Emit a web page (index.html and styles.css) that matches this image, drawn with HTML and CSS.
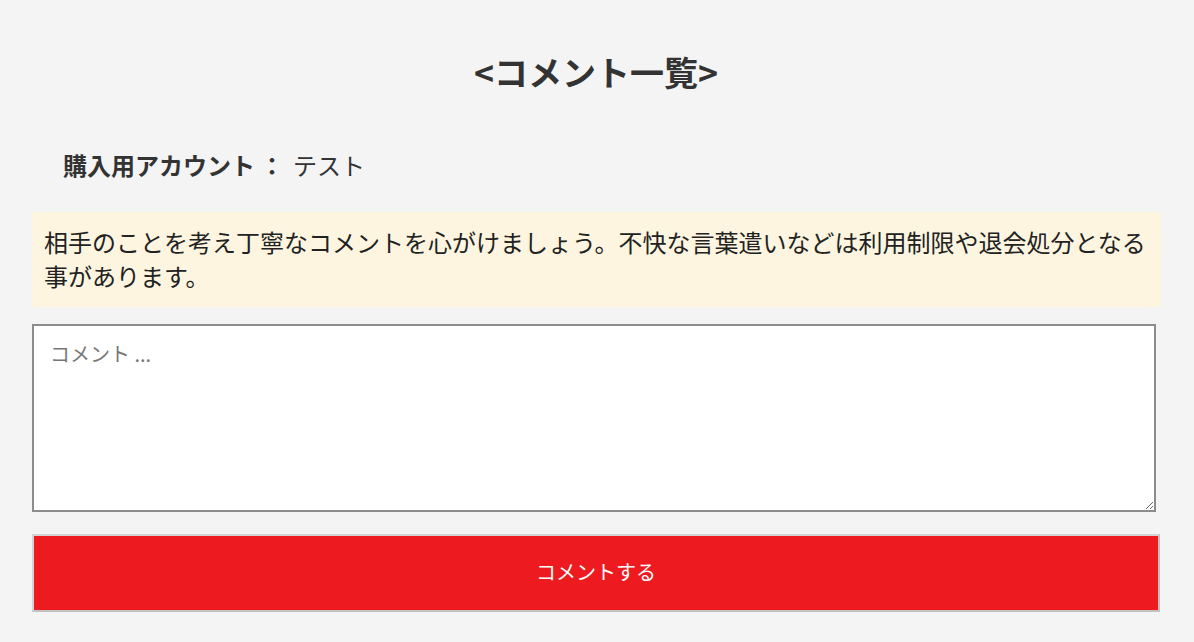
FILE: index.html
```html
<!DOCTYPE html>
<html lang="ja">
<head>
<meta charset="utf-8">
<title>コメント一覧</title>
<link rel="stylesheet" href="styles.css">
</head>
<body>
<main class="page">
  <h1 class="title">&lt;コメント一覧&gt;</h1>
  <p class="account"><span class="account-label">購入用アカウント</span><span class="account-sep">：</span><span class="account-name">テスト</span></p>
  <div class="notice">相手のことを考え丁寧なコメントを心がけましょう。不快な言葉遣いなどは利用制限や退会処分となる事があります。</div>
  <form class="comment-form">
    <textarea class="comment-input" placeholder="コメント ..."></textarea>
    <button type="button" class="comment-submit">コメントする</button>
  </form>
</main>
</body>
</html>
```
FILE: styles.css
```css
html, body {
  margin: 0;
  padding: 0;
  background: #f4f4f4;
}
body {
  font-family: "Noto Sans CJK JP", "Noto Sans", sans-serif;
  color: #333;
}
.page {
  padding: 0 34px 0 32px;
  display: flex;
  flex-direction: column;
}
.title {
  margin: 48px 0 0;
  font-size: 34px;
  line-height: 48px;
  font-weight: bold;
  text-align: center;
  color: #333;
}
.account {
  margin: 53px 0 0;
  padding-left: 31px;
  font-size: 24px;
  line-height: 32px;
  color: #333;
}
.account-label {
  font-weight: bold;
}
.account-sep {
  font-weight: bold;
  margin: 0 9px 0 5px;
}
.notice {
  margin-top: 31px;
  margin-right: -1px;
  background: #fdf5e0;
  padding: 13px 10px 14px 12px;
  font-size: 24px;
  line-height: 34px;
  color: #222;
}
.comment-form {
  margin-top: 17px;
  display: flex;
  flex-direction: column;
}
.comment-input {
  box-sizing: border-box;
  width: calc(100% - 4px);
  height: 188px;
  border: 2px solid #8c8c8c;
  background: #fff;
  padding: 14px 16px;
  font-family: "Noto Sans CJK JP", "Noto Sans", sans-serif;
  font-size: 20px;
  line-height: 28px;
  color: #333;
  margin: 0;
  resize: vertical;
}
.comment-input::placeholder {
  color: #777;
}
.comment-submit {
  box-sizing: border-box;
  margin-top: 22px;
  width: 100%;
  height: 78px;
  padding: 0 0 4px;
  background: #ed1b20;
  border: 2px solid #d4d4d4;
  border-bottom-color: #c2c2c2;
  border-right-color: #c2c2c2;
  color: #fff;
  font-family: "Noto Sans CJK JP", "Noto Sans", sans-serif;
  font-size: 20px;
}
```
